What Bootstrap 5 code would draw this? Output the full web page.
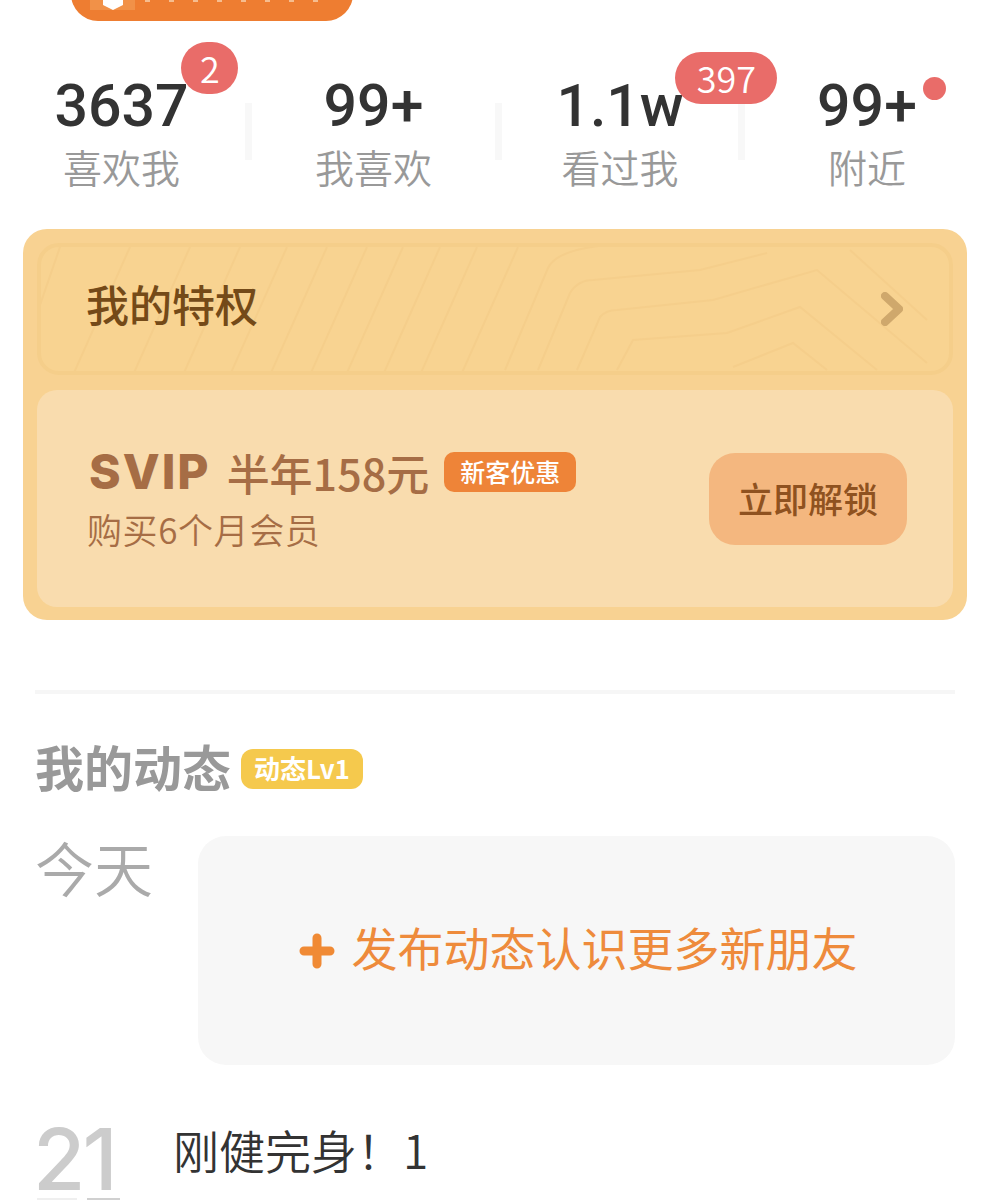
<!DOCTYPE html>
<html lang="zh-CN">
  <head>
    <meta charset="UTF-8" />
    <title>我的</title>
    <link rel="stylesheet" href="https://cdn.jsdelivr.net/npm/bootstrap@5.3.0/dist/css/bootstrap.min.css" />
    <style>
      html, body { height: 1200px; overflow: hidden; }
      body { background: #fff; font-family: "Noto Sans CJK SC", "Noto Sans", sans-serif; color: #333; }

      .top-pill { margin: -39px 0 0 71px; width: 282px; height: 60px; background: #ee7d31; border-radius: 0 0 27px 27px; padding-left: 19px; }
      .top-pill-icon { width: 45px; height: 49px; background: #f19148; }
      .top-pill-specks { width: 190px; height: 41px; margin-left: 10px; background: repeating-linear-gradient(90deg, #f6bd8f 0 5px, transparent 5px 24px) bottom / 100% 2px no-repeat; }

      .stats-row { margin-top: 54px; }
      .stat-cell { text-align: center; }
      .stat-first { padding-right: 2px; }
      .stat-num { font-family: Roboto, "Noto Sans", sans-serif; font-weight: 500; font-size: 59px; line-height: 60px; color: #333; display: inline-block; padding-top: 1px; }
      .stat-label { font-size: 39px; line-height: 56px; color: #999; font-weight: 350; padding-top: 2px; }
      .stat-sep { width: 7px; height: 57px; margin-top: 28px; background: #f8f8f8; flex: none; }
      .stat-badge { position: absolute; height: 52px; background: #e96c69; color: #fff; border-radius: 26px; font-weight: 350; font-size: 36px; line-height: 50px; text-align: center; }
      .badge-two { width: 57px; left: 127px; top: -33px; }
      .badge-many { width: 102px; left: 119px; top: -23px; }
      .stat-dot { position: absolute; width: 23px; height: 23px; border-radius: 50%; background: #e96c69; left: 106px; top: 2px; }

      .vip-card { margin: 35px 23px 0; height: 391px; padding: 14px; background: #f8d292; border-radius: 24px; }
      .vip-head { height: 132px; border: 4px solid #f5ce8a; border-radius: 22px; background: #f8d391; padding: 0 46px 0 45px; overflow: hidden; }
      .vip-pattern { position: absolute; left: -4px; top: -4px; width: 916px; height: 132px; }
      .vip-title { font-size: 43px; font-weight: 500; color: #744a18; margin-top: -12px; }
      .vip-offer { margin-top: 15px; height: 217px; background: #f9dcae; border-radius: 20px; padding: 0 46px 0 52px; }
      .offer-line { height: 58px; margin-bottom: 5px; }
      .offer-svip { font-family: Inter, sans-serif; font-weight: 800; font-size: 48px; letter-spacing: 2px; color: #a66d45; line-height: 58px; }
      .offer-price { font-size: 43px; font-weight: 500; color: #a66d45; margin-left: 16px; line-height: 58px; }
      .offer-tag { background: #ee8438; color: #fff; font-size: 25px; font-weight: 500; height: 40px; line-height: 38px; width: 132px; text-align: center; border-radius: 10px; margin-left: 15px; }
      .offer-sub { font-size: 35px; letter-spacing: 0.6px; line-height: 46px; color: #a66d45; margin: 0 0 2px -2px; font-weight: 350; }
      .offer-btn { width: 198px; height: 92px; background: #f4b77f; color: #8f5220; border: 0; border-radius: 26px; font-size: 35px; font-weight: 500; padding: 0; }

      .split-line { margin: 70px 35px 0; height: 4px; background: #f6f6f6; }

      .moment-head { margin: 45px 0 0 35px; height: 60px; }
      .moment-title { font-size: 49px; font-weight: 700; color: #999; line-height: 60px; margin-top: -6px; }
      .moment-level { margin-left: 10px; width: 122px; height: 40px; background: #f5c94d; color: #fff; font-size: 26px; font-weight: 700; line-height: 38px; text-align: center; border-radius: 12px; }

      .today-row { margin: 37px 35px 0 35px; }
      .today-label { width: 163px; flex: none; font-size: 59px; line-height: 62px; font-weight: 350; color: #aaa; }
      .publish-box { flex: 1; height: 229px; background: #f7f7f7; border-radius: 28px; color: #ee8b3c; font-size: 46px; padding-left: 3px; }
      .publish-plus { width: 36px; height: 36px; margin-right: 17px; flex: none; }
      .publish-text { margin-top: -8px; }

      .post-row { margin: 57px 0 0 33px; }
      .post-day { width: 140px; flex: none; font-family: Inter, sans-serif; font-weight: 500; font-size: 85px; letter-spacing: -3px; line-height: 75px; color: #ccc; }
      .post-text { font-size: 46px; line-height: 60px; color: #333; font-weight: 350; margin-top: -3px; }
      .month-tops { margin: 1px 0 0 4px; gap: 10px; }
      .month-tops i { display: block; height: 2px; }
      .month-tops i:first-child { width: 40px; background: #efefef; }
      .month-tops i:last-child { width: 33px; background: #d0d0d0; }
    </style>
  </head>
  <body>
    <div class="top-pill d-flex">
      <div class="top-pill-icon">
        <svg width="45" height="49" viewBox="0 0 45 49"><path d="M13 38h20v6l-10 5-10-5z" fill="#fff" /></svg>
      </div>
      <div class="top-pill-specks"></div>
    </div>

    <div class="stats-row d-flex">
      <div class="stat-cell stat-first" style="width: 245px">
        <div class="position-relative d-inline-block">
          <span class="stat-num">3637</span>
          <span class="stat-badge badge-two">2</span>
        </div>
        <div class="stat-label">喜欢我</div>
      </div>
      <div class="stat-sep"></div>
      <div class="stat-cell" style="width: 243px">
        <span class="stat-num">99+</span>
        <div class="stat-label">我喜欢</div>
      </div>
      <div class="stat-sep"></div>
      <div class="stat-cell" style="width: 236px">
        <div class="position-relative d-inline-block">
          <span class="stat-num">1.1w</span>
          <span class="stat-badge badge-many">397</span>
        </div>
        <div class="stat-label">看过我</div>
      </div>
      <div class="stat-sep"></div>
      <div class="stat-cell" style="width: 244px">
        <div class="position-relative d-inline-block">
          <span class="stat-num">99+</span>
          <span class="stat-dot"></span>
        </div>
        <div class="stat-label">附近</div>
      </div>
    </div>

    <div class="vip-card">
      <div class="vip-head position-relative d-flex align-items-center justify-content-between">
        <svg class="vip-pattern" viewBox="37 243 916 132" fill="none" stroke="#f5ce8b" stroke-width="2">
          <path d="M60 247 40 305M130 247 73 375M190 247 133 375M240 247 183 375M287 247 230 375M327 247 270 375M367 247 310 375M403 247 346 375M440 247 383 375M477 247 420 375M518 247 461 375" />
          <path d="M538 370 570 293Q578 280 593 280L700 270 767 253" />
          <path d="M505 370 548 268Q556 250 607 245" />
          <path d="M577 370 600 317Q606 310 617 310L713 300 817 270 927 363" />
          <path d="M617 370 633 340 727 333 800 307 877 370" />
          <path d="M733 367 793 343 827 370" />
          <path d="M850 250 927 320" />
        </svg>
        <span class="vip-title position-relative">我的特权</span>
        <svg class="position-relative" width="22" height="34" viewBox="0 0 22 34" fill="none" stroke="#cfa86c" stroke-width="8" stroke-linecap="round" stroke-linejoin="round"><path d="M4 4 18 17 4 30" /></svg>
      </div>
      <div class="vip-offer d-flex align-items-center justify-content-between">
        <div>
          <div class="offer-line d-flex align-items-center">
            <span class="offer-svip">SVIP</span>
            <span class="offer-price">半年158元</span>
            <span class="offer-tag">新客优惠</span>
          </div>
          <div class="offer-sub">购买6个月会员</div>
        </div>
        <button class="btn offer-btn" type="button">立即解锁</button>
      </div>
    </div>

    <div class="split-line"></div>

    <div class="moment-head d-flex align-items-center">
      <span class="moment-title">我的动态</span>
      <span class="moment-level">动态Lv1</span>
    </div>

    <div class="today-row d-flex">
      <div class="today-label">今天</div>
      <div class="publish-box d-flex align-items-center justify-content-center">
        <svg class="publish-plus" viewBox="0 0 36 36" fill="none" stroke="#f08a35" stroke-width="9" stroke-linecap="round"><path d="M18 5v26M5 18h26" /></svg>
        <span class="publish-text">发布动态认识更多新朋友</span>
      </div>
    </div>

    <div class="post-row d-flex">
      <div class="post-day">
        21
        <div class="month-tops d-flex"><i></i><i></i></div>
      </div>
      <div class="post-text">刚健完身！1</div>
    </div>

    <script src="https://cdn.jsdelivr.net/npm/bootstrap@5.3.0/dist/js/bootstrap.bundle.min.js"></script>
  </body>
</html>
